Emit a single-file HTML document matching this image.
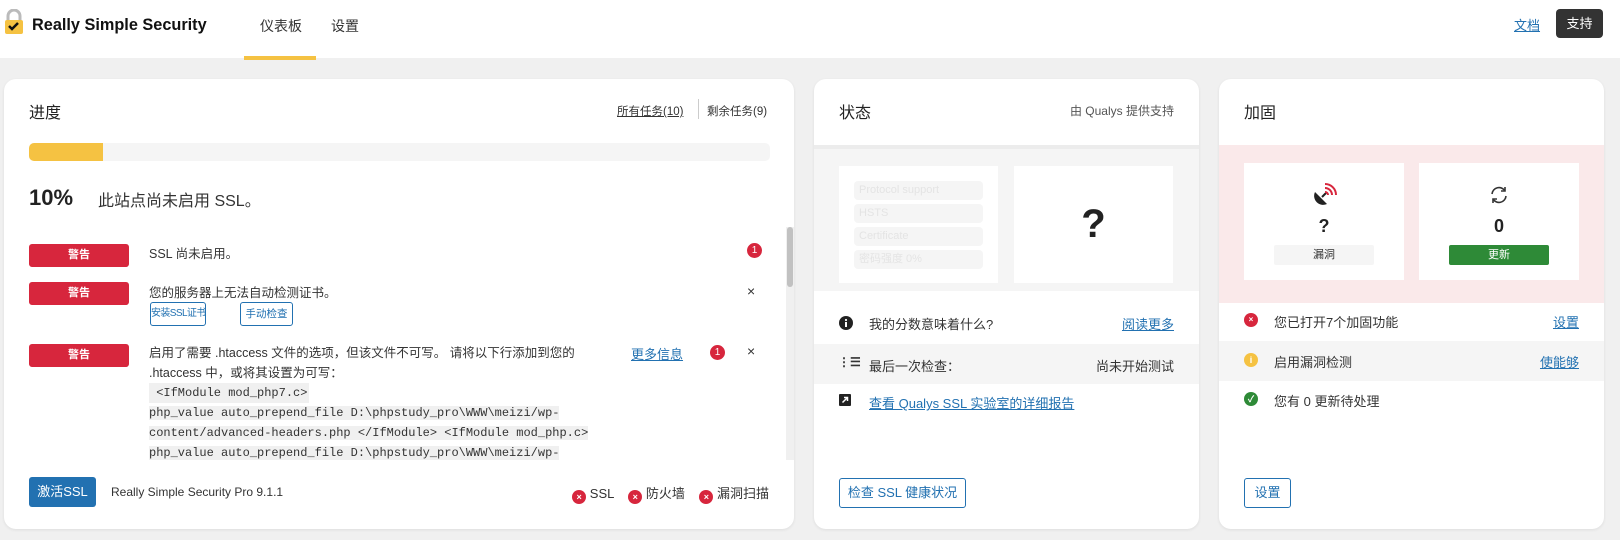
<!DOCTYPE html>
<html><head><meta charset="utf-8"><style>
*{box-sizing:border-box;margin:0;padding:0}
body{width:1620px;height:540px;background:#f0f0f0;font-family:"Liberation Sans","Noto Sans CJK SC",sans-serif;color:#333;font-size:13px;position:relative;overflow:hidden}
.abs{position:absolute}
.hdr{left:0;top:0;width:1620px;height:58px;background:#fff}
.card{background:#fff;border-radius:12px;box-shadow:0 1px 3px rgba(0,0,0,.08);overflow:hidden}
.t{font-size:16px;color:#222}
.warn{background:#d7263d;color:#fff;font-size:11px;border-radius:3px;text-align:center;line-height:23px;width:100px;height:23px;font-weight:bold}
.sb{border:1px solid #2271b1;color:#2271b1;border-radius:3px;font-size:10.5px;text-align:center;line-height:22px;height:24px;background:#fff;white-space:nowrap}
.code{font-family:"Liberation Mono",monospace;font-size:12px;background:#f0f0f0;line-height:20px;color:#333}
.badge{width:15px;height:15px;border-radius:50%;background:#d7263d;color:#fff;font-size:10px;text-align:center;line-height:15px}
.x{font-size:14px;color:#333}
a,.lnk{color:#2271b1;text-decoration:underline}
.xi{display:inline-block;width:14px;height:14px;border-radius:50%;background:#d7263d;color:#fff;font-size:9px;text-align:center;line-height:14px;vertical-align:-2px;font-weight:bold}
.fb{background:#f5f5f5;border-radius:4px;height:19px;color:#e4e4e4;font-size:11px;line-height:19px;padding-left:5px;width:129px}
</style></head><body>
<div class="abs hdr"></div>
<svg class="abs" style="left:4px;top:9px" width="20" height="26" viewBox="0 0 20 26"><path d="M4 11V7a6 6 0 0 1 12 0v4" fill="none" stroke="#bbb" stroke-width="3"/><rect x="1" y="11" width="18" height="14" rx="2" fill="#f5c242"/><path d="M5 17l3 3 6-6" fill="none" stroke="#111" stroke-width="2.5"/></svg>
<div class="abs" style="left:32px;top:16px;font-size:16.3px;font-weight:bold;color:#111">Really Simple Security</div>
<div class="abs" style="left:260px;top:16px;font-size:14px;color:#333">仪表板</div>
<div class="abs" style="left:331px;top:16px;font-size:14px;color:#333">设置</div>
<div class="abs" style="left:244px;top:56px;width:72px;height:4px;background:#f5c242"></div>
<div class="abs lnk" style="left:1514px;top:15px;font-size:13px">文档</div>
<div class="abs" style="left:1556px;top:9px;width:47px;height:29px;background:#333;color:#fff;border-radius:4px;text-align:center;line-height:29px;font-size:13px">支持</div>

<!-- left card -->
<div class="abs card" style="left:4px;top:79px;width:790px;height:450px">
 <div class="abs t" style="left:25px;top:20px">进度</div>
 <div class="abs" style="left:613px;top:24px;font-size:11.5px;text-decoration:underline">所有任务(10)</div>
 <div class="abs" style="left:694px;top:20px;width:1px;height:20px;background:#ccc"></div>
 <div class="abs" style="left:703px;top:24px;font-size:11.5px">剩余任务(9)</div>
 <div class="abs" style="left:25px;top:64px;width:741px;height:18px;background:#f5f5f5;border-radius:5px;overflow:hidden"><div style="width:74px;height:18px;background:#f5c242"></div></div>
 <div class="abs" style="left:25px;top:106px;font-size:22px;font-weight:bold;color:#222">10%</div>
 <div class="abs" style="left:94px;top:108px;font-size:16px">此站点尚未启用 SSL。</div>
 <div class="abs warn" style="left:25px;top:165px">警告</div>
 <div class="abs" style="left:145px;top:164px;font-size:12.5px">SSL 尚未启用。</div>
 <div class="abs badge" style="left:743px;top:164px">1</div>
 <div class="abs warn" style="left:25px;top:203px">警告</div>
 <div class="abs" style="left:145px;top:203px;font-size:12.5px">您的服务器上无法自动检测证书。</div>
 <div class="abs x" style="left:743px;top:204px">×</div>
 <div class="abs sb" style="left:146px;top:223px;width:56px;font-size:10px;letter-spacing:-0.6px">安装SSL证书</div>
 <div class="abs sb" style="left:236px;top:223px;width:53px">手动检查</div>
 <div class="abs warn" style="left:25px;top:265px">警告</div>
 <div class="abs" style="left:145px;top:264px;width:460px;line-height:20px;font-size:12.5px">启用了需要 .htaccess 文件的选项，但该文件不可写。 请将以下行添加到您的<br>.htaccess 中，或将其设置为可写：</div>
 <div class="abs lnk" style="left:627px;top:265px">更多信息</div>
 <div class="abs badge" style="left:706px;top:266px">1</div>
 <div class="abs x" style="left:743px;top:264px">×</div>
 <div class="abs" style="left:145px;top:304px;width:450px;height:120px;overflow:hidden">
  <span class="code" style="display:inline-block;padding-right:2px">&nbsp;&lt;IfModule mod_php7.c&gt;</span><br>
  <span class="code">php_value auto_prepend_file D:\phpstudy_pro\WWW\meizi/wp-</span><br>
  <span class="code">content/advanced-headers.php &lt;/IfModule&gt; &lt;IfModule mod_php.c&gt;</span><br>
  <span class="code">php_value auto_prepend_file D:\phpstudy_pro\WWW\meizi/wp-</span>
 </div>
 <div class="abs" style="left:782px;top:148px;width:8px;height:233px;background:#f0f0f0"></div>
 <div class="abs" style="left:783px;top:148px;width:6px;height:60px;background:#c1c1c1;border-radius:3px"></div>
 <div class="abs" style="left:25px;top:398px;width:67px;height:30px;background:#2271b1;color:#fff;border-radius:3px;text-align:center;line-height:30px;font-size:13px">激活SSL</div>
 <div class="abs" style="left:107px;top:406px;font-size:12px">Really Simple Security Pro 9.1.1</div>
 <div class="abs" style="right:25px;top:404px;font-size:13px;white-space:nowrap"><span class="xi">×</span> SSL &nbsp;&nbsp;&nbsp;<span class="xi">×</span> 防火墙 &nbsp;&nbsp;&nbsp;<span class="xi">×</span> 漏洞扫描</div>
</div>

<!-- middle card -->
<div class="abs card" style="left:814px;top:79px;width:385px;height:450px">
 <div class="abs t" style="left:25px;top:20px">状态</div>
 <div class="abs" style="right:25px;top:23px;font-size:12px;color:#555">由 Qualys 提供支持</div>
 <div class="abs" style="left:0;top:66px;width:385px;height:146px;background:#f5f5f5;border-top:4px solid #ececec"></div>
 <div class="abs" style="left:25px;top:87px;width:159px;height:117px;background:#fff;padding:15px 0 0 15px">
  <div class="fb">Protocol support</div><div class="fb" style="margin-top:4px">HSTS</div><div class="fb" style="margin-top:4px">Certificate</div><div class="fb" style="margin-top:4px">密码强度 0%</div>
 </div>
 <div class="abs" style="left:200px;top:87px;width:159px;height:117px;background:#fff;text-align:center;line-height:117px;font-size:40px;font-weight:bold;color:#222">?</div>
 <svg class="abs" style="left:25px;top:237px" width="14" height="14"><circle cx="7" cy="7" r="7" fill="#222"/><rect x="6" y="6" width="2" height="5" fill="#fff"/><circle cx="7" cy="4" r="1.1" fill="#fff"/></svg>
 <div class="abs" style="left:55px;top:235px">我的分数意味着什么?</div>
 <div class="abs lnk" style="right:25px;top:235px">阅读更多</div>
 <div class="abs" style="left:0;top:265px;width:385px;height:40px;background:#f5f5f5"></div>
 <div class="abs" style="left:24px;top:276px;font-size:12px;font-weight:bold">⋮☰</div>
 <div class="abs" style="left:55px;top:277px">最后一次检查：</div>
 <div class="abs" style="right:25px;top:277px">尚未开始测试</div>
 <svg class="abs" style="left:25px;top:315px" width="12" height="12"><rect width="12" height="12" rx="1" fill="#222"/><path d="M3.5 8.5L8 4M5 3.5h3.5v3.5" stroke="#fff" stroke-width="1.5" fill="none"/></svg>
 <div class="abs lnk" style="left:55px;top:314px">查看 Qualys SSL 实验室的详细报告</div>
 <div class="abs sb" style="left:25px;top:399px;width:127px;height:30px;line-height:28px;font-size:13px">检查 SSL 健康状况</div>
</div>

<!-- right card -->
<div class="abs card" style="left:1219px;top:79px;width:385px;height:450px">
 <div class="abs t" style="left:25px;top:20px">加固</div>
 <div class="abs" style="left:0;top:66px;width:385px;height:158px;background:#fae9ea"></div>
 <div class="abs" style="left:25px;top:84px;width:160px;height:117px;background:#fff;text-align:center">
  <svg style="position:absolute;left:69px;top:20px" width="24" height="24" viewBox="0 0 24 24"><path d="M2 9a9 9 0 0 0 12 12z" fill="#222"/><path d="M9 14l4-4" stroke="#222" stroke-width="2"/><path d="M12 5a7 7 0 0 1 7 7M12 1a11 11 0 0 1 11 11M12 9a3 3 0 0 1 3 3" stroke="#d7263d" stroke-width="2" fill="none"/></svg>
  <div style="position:absolute;left:0;width:160px;top:53px;font-size:18px;font-weight:bold;color:#222">?</div>
  <div style="position:absolute;left:30px;top:82px;width:100px;height:20px;background:#f5f5f5;border-radius:2px;font-size:11px;line-height:20px">漏洞</div>
 </div>
 <div class="abs" style="left:200px;top:84px;width:160px;height:117px;background:#fff;text-align:center">
  <svg style="position:absolute;left:70px;top:22px" width="20" height="20" viewBox="0 0 20 20"><path d="M3 9a7 7 0 0 1 13-3M17 11a7 7 0 0 1-13 3" fill="none" stroke="#333" stroke-width="1.6"/><path d="M16 2v4h-4M4 18v-4h4" fill="none" stroke="#333" stroke-width="1.6"/></svg>
  <div style="position:absolute;left:0;width:160px;top:53px;font-size:18px;font-weight:bold;color:#222">0</div>
  <div style="position:absolute;left:30px;top:82px;width:100px;height:20px;background:#2e8a37;color:#fff;border-radius:2px;font-size:11px;line-height:20px">更新</div>
 </div>
 <div class="abs xi" style="left:25px;top:234px;font-size:8px">×</div>
 <div class="abs" style="left:55px;top:233px">您已打开7个加固功能</div>
 <div class="abs lnk" style="right:25px;top:233px">设置</div>
 <div class="abs" style="left:0;top:262px;width:385px;height:40px;background:#f5f5f5"></div>
 <div class="abs xi" style="left:25px;top:274px;background:#f5c242;font-size:9px">i</div>
 <div class="abs" style="left:55px;top:273px">启用漏洞检测</div>
 <div class="abs lnk" style="right:25px;top:273px">使能够</div>
 <div class="abs xi" style="left:25px;top:313px;background:#2e8a37;font-size:9px">✓</div>
 <div class="abs" style="left:55px;top:312px">您有 0 更新待处理</div>
 <div class="abs sb" style="left:25px;top:399px;width:47px;height:30px;line-height:28px;font-size:13px">设置</div>
</div>
</body></html>
